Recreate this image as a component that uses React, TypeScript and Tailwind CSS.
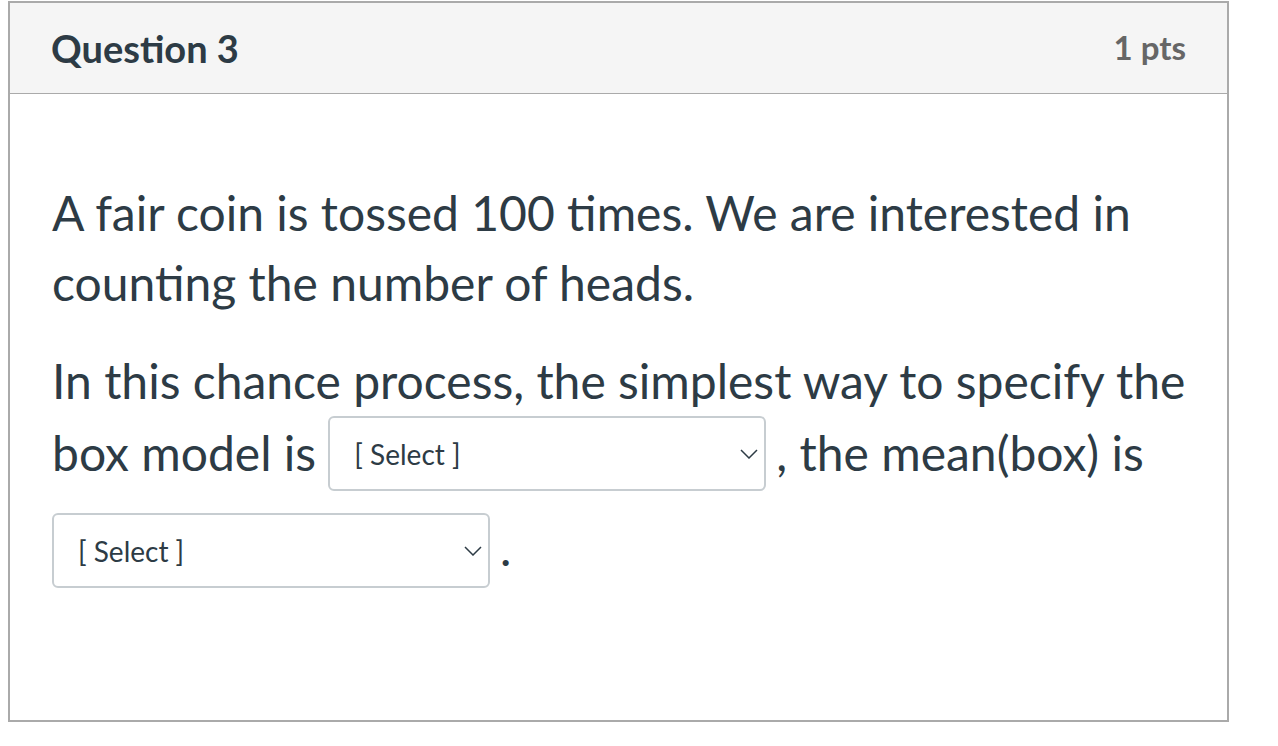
function SelectBox({ className = '' }: { className?: string }) {
  return (
    <span
      className={`inline-flex h-[75px] w-[438px] items-center justify-between rounded-[6px] border-2 border-[#c7cdd1] bg-white pl-[24px] pr-[6px] align-middle text-[28px] leading-none text-[#2d3b45] ${className}`}
    >
      <span>[ Select ]</span>
      <svg width="18" height="10" viewBox="0 0 18 10" fill="none" className="text-[#2d3b45]">
        <polyline points="1,1 9,9 17,1" stroke="currentColor" strokeWidth="1.5" />
      </svg>
    </span>
  )
}

export default function App() {
  return (
    <div className="min-h-[746px] bg-white font-['Lato','Liberation_Sans',sans-serif] text-[#2d3b45]">
      <div className="ml-[8px] mt-[1px] flex h-[721px] w-[1221px] flex-col border-2 border-[#aaaaaa]">
        {/* Header */}
        <div className="flex h-[91px] items-center justify-between border-b border-[#aaaaaa] bg-[#f5f5f5] px-[41px]">
          <h2 className="text-[38px] font-bold text-[#2d3b45]">Question 3</h2>
          <span className="text-[33px] font-bold text-[#666666]">1 pts</span>
        </div>

        {/* Body */}
        <div className="pl-[42px] pr-[28px] pt-[84px] text-[48px] leading-[70px]">
          <p>A fair coin is tossed 100 times. We are interested in counting the number of heads.</p>
          <p className="mt-[28px]">
            In this chance process, the simplest way to specify the box model is{' '}
            <SelectBox className="mb-[10px] mr-[10px]" />, the mean(box) is{' '}
            <SelectBox className="mb-[18px] mr-[10px] mt-[12px]" />.
          </p>
        </div>
      </div>
    </div>
  )
}
